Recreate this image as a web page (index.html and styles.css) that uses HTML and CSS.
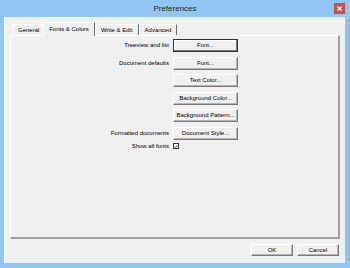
FILE: index.html
```html
<!DOCTYPE html>
<html lang="en">

<head>
    <meta charset="UTF-8">
    <title>Preferences</title>
    <link rel="stylesheet" href="styles.css">
</head>

<body>
    <div class="window">
        <div class="titlebar">
            <span class="tspace"></span>
            <span class="title">Preferences</span>
            <span class="closebtn">
                <svg width="5" height="5" viewBox="0 0 5 5">
                    <path d="M0.5 0.5 L4.5 4.5 M4.5 0.5 L0.5 4.5" stroke="#fff" stroke-width="1.2"/>
                </svg>
            </span>
        </div>

        <div class="client">
            <div class="tabs">
                <div class="tab">General</div>
                <div class="tab tabSel">Fonts &amp; Colors</div>
                <div class="tab">Write &amp; Edit</div>
                <div class="tab">Advanced</div>
            </div>

            <div class="panel">
                <div class="form">
                    <span class="lbl">Treeview and list</span>
                    <span class="btn btnDefault">Font...</span>

                    <span class="lbl">Document defaults</span>
                    <span class="btn">Font...</span>

                    <span class="lbl"></span>
                    <span class="btn">Text Color...</span>

                    <span class="lbl"></span>
                    <span class="btn">Background Color...</span>

                    <span class="lbl"></span>
                    <span class="btn">Background Pattern...</span>

                    <span class="lbl">Formatted documents</span>
                    <span class="btn">Document Style...</span>

                    <span class="lbl lastRow">Show all fonts</span>
                    <span class="chkWrap lastRow">
                        <span class="chk">
                            <svg width="6" height="6" viewBox="0 0 6 6">
                                <path d="M1 3 L2.5 4.5 L5 1.2" stroke="#000" stroke-width="1" fill="none"/>
                            </svg>
                        </span>
                    </span>
                </div>
            </div>

            <div class="footer">
                <span class="btn fbtn">OK</span>
                <span class="btn fbtn">Cancel</span>
            </div>
        </div>
    </div>
</body>

</html>
```

FILE: styles.css
```css
body {
    margin: 0;
    font-family: "Liberation Sans", Arial, sans-serif;
}

.window {
    width: 350px;
    height: 268px;
    box-sizing: border-box;
    background-color: #92c6f2;
    padding: 0 5px 5px 4px;
    display: flex;
    flex-direction: column;
}

.titlebar {
    height: 17px;
    display: flex;
    align-items: flex-start;
}

.tspace {
    width: 11px;
}

.title {
    flex: 1;
    text-align: center;
    font-size: 8px;
    line-height: 17px;
    color: #1e1e1e;
    padding-left: 1px;
}

.closebtn {
    width: 11px;
    height: 11px;
    margin-top: 3px;
    background-color: #c75050;
    display: flex;
    align-items: center;
    justify-content: center;
}

.client {
    flex: 1;
    background-color: #f0f0f0;
    border-left: 1px solid #fafafa;
    padding: 5px 5px 0 5px;
    display: flex;
    flex-direction: column;
}

.tabs {
    display: flex;
    height: 13px;
    padding-left: 2px;
    align-items: flex-end;
}

.tab {
    font-size: 6px;
    height: 11px;
    line-height: 11px;
    box-sizing: border-box;
    padding: 0 5px;
    border-top: 1px solid #ffffff;
    border-left: 1px solid #ffffff;
    border-right: 1px solid #696969;
    color: #000;
}

.tab:first-child {
    width: 33px;
    text-align: center;
}

.tabSel {
    height: 14px;
    line-height: 12px;
    margin-bottom: -1px;
    width: 52px;
    margin-left: -2px;
    text-align: center;
    background-color: #f0f0f0;
    position: relative;
    z-index: 1;
}

.panel {
    height: 204px;
    box-sizing: border-box;
    border-top: 1px solid #ffffff;
    border-left: 1px solid #ffffff;
    border-right: 2px solid #a0a0a0;
    border-bottom: 2px solid #a0a0a0;
    padding-top: 3px;
}

.form {
    display: grid;
    grid-template-columns: 158px 65px;
    column-gap: 4px;
    grid-template-rows: repeat(6, 13px) 6px;
    row-gap: 4.6px;
}

.lbl {
    font-size: 6px;
    line-height: 13px;
    text-align: right;
    color: #000;
}

.lastRow {
    margin-top: -1.5px;
    line-height: 6px;
    height: 6px;
}

.btn {
    font-size: 6px;
    height: 13px;
    line-height: 11px;
    box-sizing: border-box;
    text-align: center;
    background-color: #f0f0f0;
    border-top: 1px solid #ffffff;
    border-left: 1px solid #ffffff;
    border-right: 1px solid #7a7a7a;
    border-bottom: 1px solid #7a7a7a;
    box-shadow: inset -1px -1px 0 #b4b4b4;
    color: #000;
    white-space: nowrap;
}

.btnDefault {
    border: 1px solid #333;
    box-shadow: inset -1px -1px 0 #7a7a7a, inset 1px 1px 0 #ffffff;
}

.chkWrap {
    display: flex;
    align-items: center;
}

.chk {
    width: 6px;
    height: 6px;
    box-sizing: border-box;
    border: 1px solid #333;
    background-color: #fff;
    display: flex;
    align-items: center;
    justify-content: center;
}

.chk svg {
    width: 5px;
    height: 5px;
}

.footer {
    display: flex;
    justify-content: flex-end;
    gap: 4px;
    margin-top: 5px;
    padding-right: 1px;
}

.fbtn {
    width: 42px;
    height: 12px;
    line-height: 10px;
}
```
